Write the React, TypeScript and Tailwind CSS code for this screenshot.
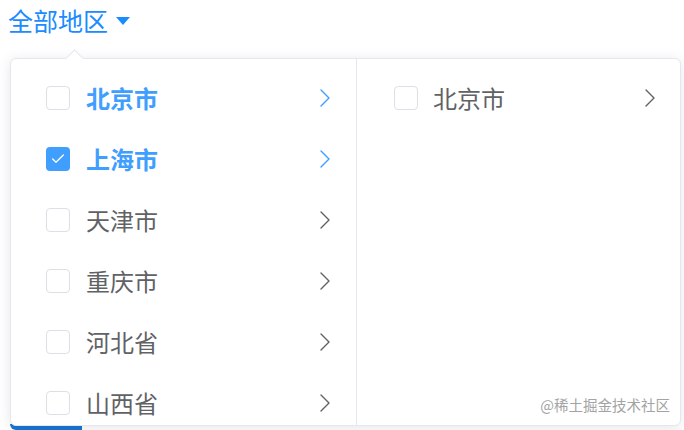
import { Check } from "lucide-react";

const LEFT = [
  { name: "北京市", active: true, checked: false },
  { name: "上海市", active: true, checked: true },
  { name: "天津市", active: false, checked: false },
  { name: "重庆市", active: false, checked: false },
  { name: "河北省", active: false, checked: false },
  { name: "山西省", active: false, checked: false },
];

function Chevron({ active }: { active?: boolean }) {
  return (
    <svg width="12" height="20" viewBox="0 0 12 20" fill="none">
      <path
        d="M2 2 L10 10 L2 18"
        stroke={active ? "#409eff" : "#606266"}
        strokeWidth="1.4"
        strokeLinecap="round"
        strokeLinejoin="round"
      />
    </svg>
  );
}

function Box({ checked }: { checked?: boolean }) {
  return checked ? (
    <span className="flex h-6 w-6 items-center justify-center rounded-[4px] bg-[#409eff]">
      <Check size={16} strokeWidth={2} color="#fff" />
    </span>
  ) : (
    <span className="h-6 w-6 rounded-[4px] border border-[#dcdfe6] bg-white" />
  );
}

export default function App() {
  return (
    <div
      className="relative h-[430px] w-[684px] overflow-hidden bg-white"
      style={{ fontFamily: '"Noto Sans CJK SC", "Noto Sans", sans-serif' }}
    >
      {/* trigger */}
      <div className="flex items-center gap-2 px-2 pt-[3px] text-[25px] leading-[35px] text-[#1a8cff]">
        <span>全部地区</span>
        <span className="h-0 w-0 border-x-[7px] border-t-[8px] border-x-transparent border-t-[#1a8cff]" />
      </div>

      {/* thing behind the panel */}
      <div className="absolute bottom-0 left-[10px] h-[6px] w-[72px] rounded-bl-[6px] bg-[#1976d2]" />

      {/* dropdown panel */}
      <div className="relative ml-[10px] mt-[20px] h-[368px] w-[671px] rounded-[6px] border border-[#e4e7ed] bg-white shadow-[0_2px_14px_rgba(0,0,0,0.1)]">
        <span className="absolute left-[57px] top-[-7px] h-[13px] w-[13px] rotate-45 border-l border-t border-[#e4e7ed] bg-white" />
        <div className="flex h-full overflow-hidden rounded-[6px]">
          <div className="w-[346px] shrink-0 border-r border-[#e4e7ed] pt-[8px]">
            {LEFT.map((r) => (
              <div key={r.name} className="flex h-[61px] items-center pl-[35px] pr-[25px]">
                <Box checked={r.checked} />
                <span
                  className={`ml-4 flex-1 text-[24px] ${
                    r.active ? "font-bold text-[#409eff]" : "text-[#606266]"
                  }`}
                >
                  {r.name}
                </span>
                <Chevron active={r.active} />
              </div>
            ))}
          </div>
          <div className="flex-1 pt-[8px]">
            <div className="flex h-[61px] items-center pl-[37px] pr-[24px]">
              <Box />
              <span className="ml-[15px] flex-1 text-[24px] text-[#606266]">北京市</span>
              <Chevron />
            </div>
          </div>
        </div>
        <span className="absolute bottom-[9px] right-[10px] text-[14.5px] text-[#a3a3a3]">
          @稀土掘金技术社区
        </span>
      </div>
    </div>
  );
}
